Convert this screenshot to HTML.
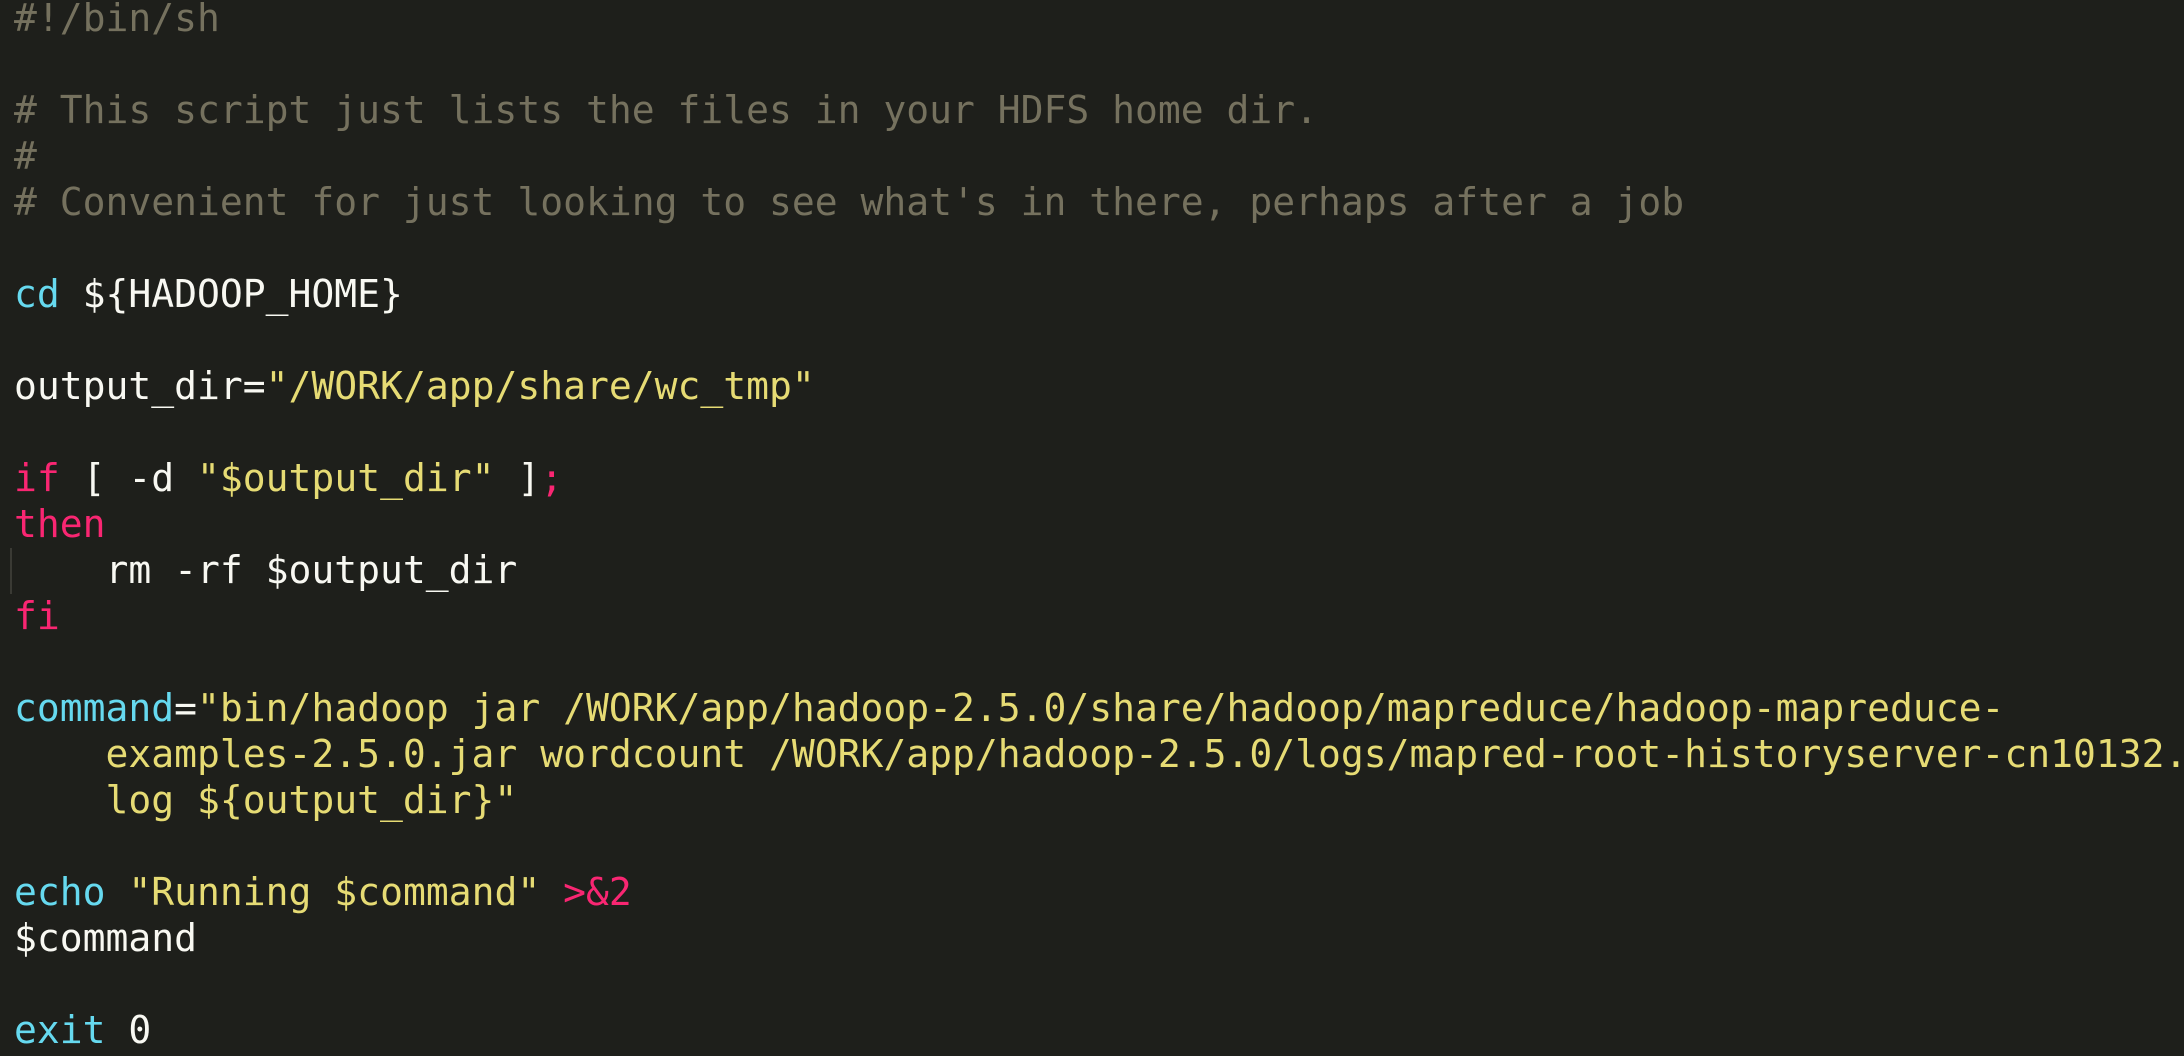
<!DOCTYPE html>
<html><head><meta charset="utf-8"><style>
html,body{margin:0;padding:0;background:#1e1f1b;width:2184px;height:1056px;overflow:hidden}
pre{margin:0;position:absolute;left:14px;top:-5px;font-family:"DejaVu Sans Mono","Liberation Mono",monospace;font-size:38px;line-height:46px;color:#f8f8f2;white-space:pre}
.c{color:#75715e}.k{color:#66d9ef}.p{color:#f92672}.s{color:#e6db74}
.g{position:absolute;left:10px;top:548px;width:2px;height:46px;background:#3a3a34}
</style></head><body>
<div class="g"></div>
<pre><span class="c">#!/bin/sh</span>

<span class="c"># This script just lists the files in your HDFS home dir.</span>
<span class="c">#</span>
<span class="c"># Convenient for just looking to see what's in there, perhaps after a job</span>

<span class="k">cd</span> ${HADOOP_HOME}

output_dir=<span class="s">"/WORK/app/share/wc_tmp"</span>

<span class="p">if</span> [ -d <span class="s">"$output_dir"</span> ]<span class="p">;</span>
<span class="p">then</span>
    rm -rf $output_dir
<span class="p">fi</span>

<span class="k">command</span>=<span class="s">"bin/hadoop jar /WORK/app/hadoop-2.5.0/share/hadoop/mapreduce/hadoop-mapreduce-</span>
<span class="s">    examples-2.5.0.jar wordcount /WORK/app/hadoop-2.5.0/logs/mapred-root-historyserver-cn10132.</span>
<span class="s">    log ${output_dir}"</span>

<span class="k">echo</span> <span class="s">"Running $command"</span> <span class="p">&gt;&amp;2</span>
$command

<span class="k">exit</span> 0</pre>
</body></html>
